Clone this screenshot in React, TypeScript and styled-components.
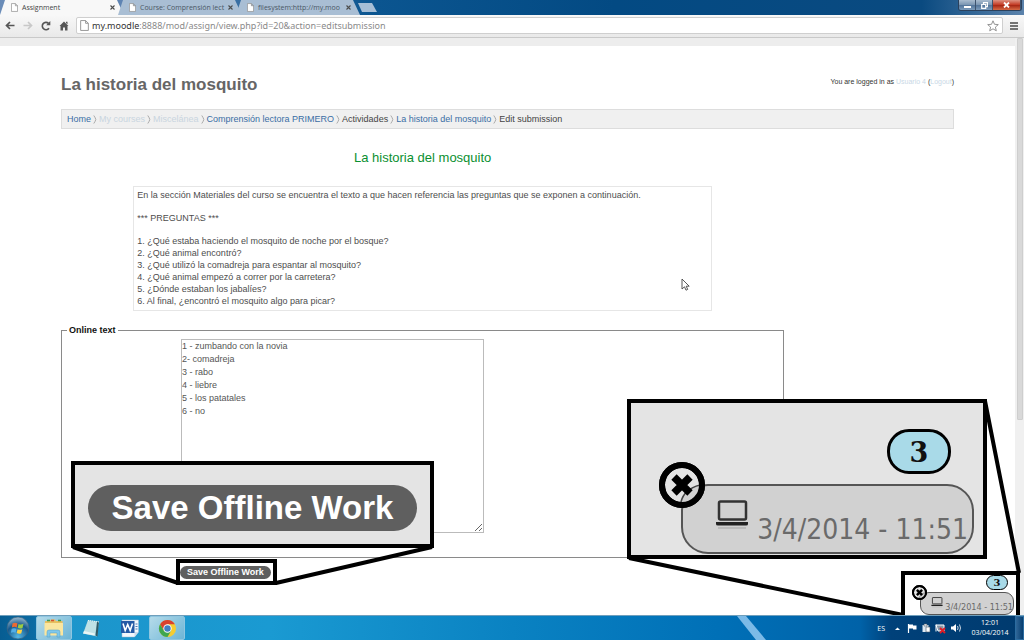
import React from "react";
import styled, { createGlobalStyle } from "styled-components";

const GlobalStyle = createGlobalStyle`
  * { box-sizing: border-box; }
  body { margin: 0; background: #fff; font-family: "Liberation Sans", Arial, sans-serif; }
  a { text-decoration: none; }
`;

const UI_FONT = `"Open Sans", "Noto Sans", sans-serif`;
const DATE_FONT = `"DejaVu Sans Condensed", "Noto Sans", sans-serif`;

const Screen = styled.div`
  position: relative;
  display: flex;
  flex-direction: column;
  min-height: 100vh;
  overflow: hidden;
`;

/* ---------- browser chrome ---------- */

const TabStrip = styled.div`
  display: flex;
  height: 15px;
  background: linear-gradient(90deg, #6a8cb8 0, #5f84b3 120px, #0b5590 375px, #034a83 60%, #0a4a80 90%, #5c83ac 100%);
  font-family: ${UI_FONT};
`;

const Tab = styled.div<{ $active?: boolean }>`
  display: flex;
  align-items: center;
  width: 124px;
  height: 15px;
  margin-right: -6px;
  padding: 0 9px 0 11px;
  background: ${(p) => (p.$active ? "#f8f8f8" : "#a9bed4")};
  color: ${(p) => (p.$active ? "#444" : "#4a5866")};
  clip-path: polygon(5px 0, 117px 0, 124px 100%, 0 100%);
  font-size: 7px;
  line-height: 14px;
`;

const TabTitle = styled.span`
  flex: 1;
  margin-left: 4px;
  white-space: nowrap;
`;

const TabClose = styled.button`
  display: flex;
  margin: 0;
  padding: 0;
  border: 0;
  background: none;
`;

const NewTab = styled.button`
  width: 19px;
  height: 9px;
  margin: 3px 0 0 4px;
  padding: 0;
  border: 0;
  background: #a6bed6;
  clip-path: polygon(0 0, 14px 0, 19px 100%, 4px 100%);
`;

const WindowButtons = styled.div`
  display: flex;
  height: 11px;
  margin-left: auto;
  margin-right: 2px;
  border: 1px solid #2b415c;
  border-top: 0;
  border-radius: 0 0 3px 3px;
  overflow: hidden;
`;

const WindowButton = styled.button<{ $close?: boolean }>`
  display: flex;
  align-items: center;
  justify-content: center;
  width: ${(p) => (p.$close ? 28 : 17)}px;
  padding: 0;
  border: 0;
  border-right: 1px solid #3d536e;
  background: ${(p) =>
    p.$close
      ? "linear-gradient(#dd9282, #c5402a 45%, #a92a17 55%, #d66a45)"
      : "linear-gradient(#a9bccf, #7d98b4 45%, #55779c 55%, #7b9bbb)"};
`;

const Toolbar = styled.div`
  display: flex;
  align-items: center;
  height: 23px;
  padding: 0 1px 1px;
  background: linear-gradient(#f8f8f8, #e9e9e9);
  border-bottom: 1px solid #c9c9c9;
`;

const ToolButton = styled.button`
  display: flex;
  justify-content: center;
  width: 18px;
  padding: 0;
  border: 0;
  background: none;
`;

const AddressBar = styled.div`
  display: flex;
  flex: 1;
  align-items: center;
  height: 17px;
  margin: 0 2px 0 3px;
  padding: 0 3px;
  border: 1px solid #cfcfcf;
  border-radius: 2px;
  background: #fff;
`;

const Address = styled.div`
  flex: 1;
  margin-left: 3px;
  color: #8a8a8a;
  font-family: "Noto Sans", sans-serif;
  font-size: 9px;
  line-height: 14px;
  b { color: #333; font-weight: 400; }
`;

/* ---------- page ---------- */

const Viewport = styled.div`
  display: flex;
  flex: 1;
`;

const Page = styled.main`
  flex: 1;
  padding: 0 61px 29px;
  border-top: 8px solid #ededed;
`;

const ScrollTrack = styled.div`
  width: 9px;
  padding: 0 1px 0 2px;
  background: #f0f0f0;
`;

const ScrollThumb = styled.div`
  height: 382px;
  border: 1px solid #cecece;
  border-radius: 1px;
  background: #d9d9d9;
`;

const PageHeader = styled.header`
  display: flex;
  justify-content: space-between;
  align-items: flex-start;
  padding-top: 29px;
`;

const SiteTitle = styled.h1`
  margin: 0;
  color: #666;
  font-size: 17px;
  line-height: 20px;
`;

const LoginInfo = styled.div`
  color: #333;
  font-size: 7px;
  line-height: 13px;
  a { color: #c9d8e6; }
`;

const Breadcrumb = styled.nav`
  display: flex;
  align-items: center;
  gap: 2px;
  height: 20px;
  margin-top: 14px;
  padding: 0 5px;
  border: 1px solid #ddd;
  background: #f0f0f0;
  color: #444;
  font-size: 9px;
  line-height: 12px;
  white-space: nowrap;
`;

const Crumb = styled.a<{ $faded?: boolean }>`
  color: ${(p) => (p.$faded ? "#c9d5df" : "#3a6ea5")};
`;

const Column = styled.div`
  width: 81%;
`;

const AssignmentTitle = styled.h2`
  margin: 20px 0 0;
  color: #0a9030;
  font-size: 13px;
  font-weight: 400;
  line-height: 18px;
  text-align: center;
`;

const Intro = styled.section`
  width: 80%;
  margin: 19px auto 0;
  padding: 2px 3px 3px;
  border: 1px solid #e6e6e6;
  color: #4d4d4d;
  font-size: 9px;
  line-height: 12px;
  p { margin: 0 0 11px; }
`;

const Questions = styled.ol`
  margin: 0;
  padding: 0;
  list-style: none;
`;

const TextFieldset = styled.fieldset`
  margin: 13px 0 0;
  padding: 3px 0 24px 119px;
  border: 1px solid #8a8a8a;
`;

const Legend = styled.legend`
  margin-left: -114px;
  padding: 0 2px;
  color: #111;
  font-size: 9px;
  font-weight: 700;
  line-height: 12px;
`;

const Answer = styled.textarea`
  display: block;
  width: 303px;
  height: 194px;
  padding: 0;
  border: 1px solid #bbb;
  background: #fff;
  color: #555;
  font-family: inherit;
  font-size: 9px;
  line-height: 13px;
  resize: both;
`;

const SaveButton = styled.button<{ $large?: boolean }>`
  display: block;
  padding: ${(p) => (p.$large ? "0 24px" : "0 7px")};
  border: 0;
  border-radius: 24px;
  background: #5f5f5f;
  color: #fff;
  font-family: inherit;
  font-size: ${(p) => (p.$large ? 33 : 9)}px;
  font-weight: 700;
  line-height: ${(p) => (p.$large ? 46 : 13)}px;
  white-space: nowrap;
`;

const FormActions = styled.div`
  display: flex;
  padding: 8px 0 0 119px;
`;

/* ---------- callouts drawn over the page ---------- */

const Connectors = styled.svg`
  position: absolute;
  top: 0;
  left: 0;
  pointer-events: none;
`;

const Callout = styled.div<{ $x: number; $y: number; $w: number; $h: number; $fill?: string }>`
  position: absolute;
  left: ${(p) => p.$x}px;
  top: ${(p) => p.$y}px;
  width: ${(p) => p.$w}px;
  height: ${(p) => p.$h}px;
  display: flex;
  align-items: center;
  justify-content: center;
  border: 4px solid #000;
  background: ${(p) => p.$fill ?? "transparent"};
`;

const ButtonZoom = styled(Callout)`
  align-items: flex-start;
  padding-top: 20px;
`;

const Status = styled.div<{ $large?: boolean }>`
  display: flex;
  flex-direction: column;
  align-items: flex-end;
  width: 100%;
  height: 100%;
  padding: ${(p) => (p.$large ? "26px 9px 0 20px" : "0 2px 0 0")};
`;

const Badge = styled.div<{ $large?: boolean }>`
  width: ${(p) => (p.$large ? 64 : 22)}px;
  height: ${(p) => (p.$large ? 45 : 15)}px;
  margin-right: ${(p) => (p.$large ? 23 : 6)}px;
  border: ${(p) => (p.$large ? "3px solid #000" : "1px solid #000")};
  border-radius: 22px;
  background: #a9dae8;
  color: #111;
  font-family: "DejaVu Serif", serif;
  font-size: ${(p) => (p.$large ? 27 : 10)}px;
  font-weight: 700;
  line-height: ${(p) => (p.$large ? 42 : 13)}px;
  text-align: center;
`;

const Pill = styled.div<{ $large?: boolean }>`
  position: relative;
  display: flex;
  align-items: flex-start;
  width: ${(p) => (p.$large ? 293 : 94)}px;
  height: ${(p) => (p.$large ? 70 : 23)}px;
  margin-top: ${(p) => (p.$large ? 10 : 2)}px;
  padding: ${(p) => (p.$large ? "14px 4px 0 32px" : "4px 0 0 10px")};
  border: ${(p) => (p.$large ? 2 : 1)}px solid #555;
  border-radius: ${(p) => (p.$large ? 27 : 9)}px;
  background: #d1d1d1;
`;

const PillTime = styled.time<{ $large?: boolean }>`
  margin-left: auto;
  padding-top: ${(p) => (p.$large ? 12 : 4)}px;
  color: #6a6a6a;
  font-family: ${DATE_FONT};
  font-size: ${(p) => (p.$large ? 28 : 9)}px;
  line-height: ${(p) => (p.$large ? 36 : 12)}px;
  white-space: nowrap;
`;

const Dismiss = styled.button<{ $large?: boolean }>`
  position: absolute;
  left: ${(p) => (p.$large ? -24 : -9)}px;
  top: ${(p) => (p.$large ? -24 : -8)}px;
  padding: 0;
  border: 0;
  background: none;
  svg { display: block; }
`;

/* ---------- taskbar ---------- */

const Taskbar = styled.footer`
  position: relative;
  display: flex;
  height: 25px;
  border-top: 1px solid #6f9fbc;
  background: linear-gradient(90deg, #075d92 0, #0b6ba3 34px, #1c95cb 60px, #1a9ad2 270px, #0a82c2 50%, #0070b7 70%, #0062a8 84%, #00417a 87%, #003a6e 100%);
  color: #fff;
  font-family: ${UI_FONT};
`;

const TaskButton = styled.button<{ $open?: boolean; $w: number }>`
  display: flex;
  align-items: center;
  justify-content: center;
  width: ${(p) => p.$w}px;
  padding: 0;
  border: ${(p) => (p.$open ? "1px solid #8fc6e0" : "0")};
  border-radius: 2px;
  background: ${(p) => (p.$open ? "linear-gradient(135deg, #b5dbea, #6db5d6)" : "none")};
`;

const Streak = styled.svg`
  position: absolute;
  left: 72%;
  top: 0;
`;

const Tray = styled.div`
  display: flex;
  align-items: center;
  gap: 4px;
  margin-left: auto;
  font-size: 7px;
`;

const Clock = styled.time`
  width: 42px;
  margin-left: 3px;
  line-height: 10px;
  text-align: center;
  white-space: nowrap;
`;

const ShowDesktop = styled.button`
  align-self: stretch;
  width: 9px;
  padding: 0;
  border: 1px solid #2b6ca0;
  background: linear-gradient(90deg, #2f6698, #073e70);
`;

/* ---------- icons ---------- */

const FileIcon = ({ h = 9 }: { h?: number }) => (
  <svg width={h - 2} height={h} viewBox="0 0 8 10">
    <path d="M.5.5h4.5l2.500 2.500v6.500h-7zM5 .5v2.500h2.500" fill="#fff" stroke="#8c8c8c" strokeWidth=".8" />
  </svg>
);

const CrossIcon = () => (
  <svg width="5" height="5" viewBox="0 0 5 5">
    <path d="M.5.5l4 4m0-4l-4 4" stroke="#4c4c4c" strokeWidth="1.100" />
  </svg>
);

const Chevron = () => (
  <svg width="4" height="9" viewBox="0 0 4 9">
    <path d="M.8.5Q2.500 3 2.800 4.500Q2.500 6 .8 8.500" fill="none" stroke="#aaa" />
  </svg>
);

const DismissIcon = ({ size }: { size: number }) => (
  <svg width={size} height={size} viewBox="0 0 46 46">
    <circle cx="23" cy="23" r="20" fill="#e4e4e4" stroke="#000" strokeWidth="6" />
    <path d="M22 42Q24 28 42 23A20 20 0 0 1 22 42" fill="#d1d1d1" />
    <path d="M22 40Q25 27 41 23" fill="none" stroke="#444" strokeWidth="1.500" />
    <circle cx="23" cy="23" r="20" fill="none" stroke="#000" strokeWidth="6" />
    <path d="M15 15l16 16M31 15L15 31" stroke="#000" strokeWidth="7.500" />
  </svg>
);

const LaptopIcon = ({ size }: { size: number }) => (
  <svg width={size} height={size} viewBox="0 0 34 34" fill="none">
    <rect x="4" y="1.500" width="27" height="18" rx="1.500" stroke="#333" strokeWidth="2.500" />
    <path d="M1 22h32v2q0 1.500-2 1.500H3q-2 0-2-1.500z" fill="#222" />
    <path d="M3 28h28" stroke="#aaa" strokeWidth="2" opacity=".6" />
  </svg>
);

const FlagsOrb = () => (
  <svg width="24" height="24" viewBox="0 0 24 24">
    <defs>
      <radialGradient id="orb" cx=".5" cy=".9" r=".9">
        <stop offset="0" stopColor="#55b8e5" />
        <stop offset=".6" stopColor="#17598e" />
        <stop offset="1" stopColor="#9fbdd0" />
      </radialGradient>
    </defs>
    <circle cx="12" cy="12" r="11" fill="url(#orb)" stroke="#39627f" strokeWidth=".7" />
    <path d="M6.500 7.500q2.500-1.500 5 0l-.8 4q-2.300-1.300-4.800 0z" fill="#ec6a32" />
    <path d="M12.500 8q2.500 1.200 5-.3l-1 4.300q-2.300 1.200-4.700-.2z" fill="#9bcc43" />
    <path d="M5.700 12.800q2.300-1.300 4.800 0l-.9 4q-2.300-1.300-4.700 0z" fill="#53aee6" />
    <path d="M11.600 13.200q2.300 1.200 4.700 0l-1 4q-2.200 1.200-4.600-.1z" fill="#fcd045" />
  </svg>
);

const FolderIcon = () => (
  <svg width="22" height="20" viewBox="0 0 22 20">
    <path d="M2 3h5l1-1.500h4L13 3h6.500v14H2z" fill="#e6bf60" />
    <path d="M4 2.500h3M15 2.500h3" stroke="#3b9c55" strokeWidth="1.500" />
    <path d="M8 2.500h3" stroke="#d4542e" strokeWidth="1.500" />
    <path d="M1.500 5h18.500v12.500H1.500z" fill="#fae6a0" />
    <path d="M4 19v-5q0-2 2-2h9q2 0 2 2v5h-3v-4H7v4z" fill="#80c7ea" stroke="#4c9cc5" strokeWidth=".5" />
  </svg>
);

const NotepadIcon = () => (
  <svg width="20" height="20" viewBox="0 0 20 20">
    <path d="M7 2l11 1.500-2 15L2 15.500z" fill="#9fd0da" />
    <path d="M7 3l9 1.500L14 16 3 14z" fill="#c0e2e6" />
    <path d="M3 13l11 2.500-.5 2L2 15.500z" fill="#e9f5f5" />
    <path d="M18 3.500l-1.500 15-2-1L16 4z" fill="#315a66" />
    <path d="M7 2.500l11 1.500" stroke="#f0f7f7" strokeDasharray="1 1" />
  </svg>
);

const WordIcon = () => (
  <svg width="18" height="19" viewBox="0 0 18 19">
    <path d="M1 1h16.500v12l-4 5H1z" fill="#f3f7fc" stroke="#9bb5d3" strokeWidth=".5" />
    <path d="M13.500 18v-5h4" fill="#cadbec" />
    <path d="M0 2h13.500v12H0z" fill="#2459a5" />
    <path d="M2 4.500l2.200 7L6.700 5.500l2.500 6 2.300-7" fill="none" stroke="#fff" strokeWidth="1.600" />
    <path d="M14.500 5h2M14.500 7.500h2M14.500 10h2" stroke="#2459a5" strokeWidth=".8" />
  </svg>
);

const ChromeIcon = () => (
  <svg width="19" height="19" viewBox="0 0 20 20">
    <circle cx="10" cy="10" r="9" fill="#f5cc31" />
    <path d="M2.200 5.500A9 9 0 0 1 17.800 5.500H10L6.100 12.200z" fill="#d9412f" />
    <path d="M2.200 5.500L6.100 12.300 13.800 12.300 10 19A9 9 0 0 1 2.200 5.500" fill="#3fa650" />
    <circle cx="10" cy="10" r="4.400" fill="#fff" />
    <circle cx="10" cy="10" r="3.400" fill="#427fc4" />
  </svg>
);

/* ---------- composition ---------- */

const StatusWidget = ({ large }: { large?: boolean }) => (
  <Status $large={large}>
    <Badge $large={large}>3</Badge>
    <Pill $large={large}>
      <Dismiss $large={large} aria-label="Discard">
        <DismissIcon size={large ? 46 : 15} />
      </Dismiss>
      <LaptopIcon size={large ? 34 : 12} />
      <PillTime $large={large}>3/4/2014 - 11:51</PillTime>
    </Pill>
  </Status>
);

const tabs = ["Assignment", "Course: Comprensión lect", "filesystem:http://my.moo"];

const crumbs = [
  { text: "Home", link: true },
  { text: "My courses", link: true, faded: true },
  { text: "Miscelánea", link: true, faded: true },
  { text: "Comprensión lectora PRIMERO", link: true },
  { text: "Actividades" },
  { text: "La historia del mosquito", link: true },
  { text: "Edit submission" },
];

const questions = [
  "1. ¿Qué estaba haciendo el mosquito de noche por el bosque?",
  "2. ¿Qué animal encontró?",
  "3. ¿Qué utilizó la comadreja para espantar al mosquito?",
  "4. ¿Qué animal empezó a correr por la carretera?",
  "5. ¿Dónde estaban los jabalíes?",
  "6. Al final, ¿encontró el mosquito algo para picar?",
];

const answers = "1 - zumbando con la novia\n2- comadreja\n3 - rabo\n4 - liebre\n5 - los patatales\n6 - no";

export default function App() {
  return (
    <Screen>
      <GlobalStyle />
      <TabStrip>
        {tabs.map((t, i) => (
          <Tab key={t} $active={i === 0}>
            <FileIcon />
            <TabTitle>{t}</TabTitle>
            <TabClose aria-label="Close tab"><CrossIcon /></TabClose>
          </Tab>
        ))}
        <NewTab aria-label="New tab" />
        <WindowButtons>
          <WindowButton aria-label="Minimize">
            <svg width="7" height="5"><path d="M0 3h7v2H0z" fill="#fff" /></svg>
          </WindowButton>
          <WindowButton aria-label="Restore">
            <svg width="7" height="7"><path d="M2.500 2V.7h4v4H5M.7 2.500h4v3.800h-4z" fill="none" stroke="#fff" strokeWidth="1.200" /></svg>
          </WindowButton>
          <WindowButton $close aria-label="Close">
            <svg width="7" height="6"><path d="M1 .5l5 5M6 .5l-5 5" stroke="#fff" strokeWidth="1.800" /></svg>
          </WindowButton>
        </WindowButtons>
      </TabStrip>

      <Toolbar>
        <ToolButton aria-label="Back">
          <svg width="10" height="9"><path d="M9.500 4.500H1.500M5 1L1.500 4.500 5 8" fill="none" stroke="#555" strokeWidth="1.700" /></svg>
        </ToolButton>
        <ToolButton aria-label="Forward">
          <svg width="10" height="9"><path d="M.5 4.500h8M5 1l3.500 3.500L5 8" fill="none" stroke="#c8c8c8" strokeWidth="1.700" /></svg>
        </ToolButton>
        <ToolButton aria-label="Reload">
          <svg width="10" height="10"><path d="M8 7.200A3.700 3.700 0 1 1 7.500 2.300" fill="none" stroke="#555" strokeWidth="1.600" /><path d="M9.300 0v4.200H5.200z" fill="#555" /></svg>
        </ToolButton>
        <ToolButton aria-label="Home">
          <svg width="10" height="10"><path d="M5 .5l4.500 4.500H8.500v4.500H6v-3H4v3H1.500V5H.5zM7 .8h1.500v2.500L7 2z" fill="#555" /></svg>
        </ToolButton>
        <AddressBar>
          <FileIcon h={11} />
          <Address><b>my.moodle</b>:8888/mod/assign/view.php?id=20&amp;action=editsubmission</Address>
          <svg width="12" height="12" viewBox="0 0 12 12"><path d="M6 .8l1.500 3.500 3.800.3-2.900 2.500.9 3.700L6 8.800l-3.300 2 .9-3.700L.7 4.600l3.800-.3z" fill="#fff" stroke="#888" strokeWidth=".9" /></svg>
        </AddressBar>
        <ToolButton aria-label="Menu">
          <svg width="8" height="8"><path d="M0 1h8M0 4h8M0 7h8" stroke="#4a4a4a" strokeWidth="1.700" /></svg>
        </ToolButton>
      </Toolbar>

      <Viewport>
        <Page>
          <PageHeader>
            <SiteTitle>La historia del mosquito</SiteTitle>
            <LoginInfo>
              You are logged in as <a href="#user">Usuario 4</a> (<a href="#logout">Logout</a>)
            </LoginInfo>
          </PageHeader>
          <Breadcrumb>
            {crumbs.map((c, i) => (
              <React.Fragment key={c.text}>
                {i > 0 && <Chevron />}
                {c.link ? <Crumb href="#page" $faded={c.faded}>{c.text}</Crumb> : <span>{c.text}</span>}
              </React.Fragment>
            ))}
          </Breadcrumb>
          <Column>
            <AssignmentTitle>La historia del mosquito</AssignmentTitle>
            <Intro>
              <p>En la sección Materiales del curso se encuentra el texto a que hacen referencia las preguntas que se exponen a continuación.</p>
              <p>*** PREGUNTAS ***</p>
              <Questions>
                {questions.map((q) => <li key={q}>{q}</li>)}
              </Questions>
            </Intro>
            <TextFieldset>
              <Legend>Online text</Legend>
              <Answer aria-label="Online text" defaultValue={answers} />
            </TextFieldset>
            <FormActions>
              <SaveButton>Save Offline Work</SaveButton>
            </FormActions>
          </Column>
        </Page>
        <ScrollTrack><ScrollThumb /></ScrollTrack>
      </Viewport>

      <Connectors width="1024" height="616" stroke="#000" strokeWidth="4" fill="none">
        <path d="M73 547L178 583M432 547L276 583M629 558L903 615M985 401L1019 573" />
      </Connectors>
      <ButtonZoom $x={71} $y={461} $w={363} $h={87} $fill="#e4e4e4">
        <SaveButton $large>Save Offline Work</SaveButton>
      </ButtonZoom>
      <Callout $x={176} $y={559} $w={101} $h={26} />
      <Callout $x={627} $y={399} $w={360} $h={160} $fill="#e4e4e4">
        <StatusWidget large />
      </Callout>
      <Callout $x={901} $y={571} $w={119} $h={48} $fill="#fff">
        <StatusWidget />
      </Callout>
      <Connectors width="1024" height="640" viewBox="0 0 1024 640">
        <path d="M682 279v10l2.500-2.200 1.500 3.400 1.700-.8-1.500-3.200h3z" fill="#fff" stroke="#444" strokeWidth=".9" />
      </Connectors>

      <Taskbar>
        <Streak width="40" height="24"><path d="M0 0h9l20 24H19z" fill="#90c8f0" opacity=".85" /></Streak>
        <TaskButton $w={36} aria-label="Start"><FlagsOrb /></TaskButton>
        <TaskButton $w={36} $open aria-label="Explorer"><FolderIcon /></TaskButton>
        <TaskButton $w={38} aria-label="Notepad"><NotepadIcon /></TaskButton>
        <TaskButton $w={39} aria-label="Word"><WordIcon /></TaskButton>
        <TaskButton $w={36} $open aria-label="Chrome"><ChromeIcon /></TaskButton>
        <Tray>
          <span>ES</span>
          <svg width="14" height="10"><path d="M6 7h5L8.500 4.500z" fill="#fff" /></svg>
          <svg width="10" height="10"><path d="M1.500 1v9" stroke="#fff" strokeWidth="1.200" /><path d="M2 1.500h4v1h3.500v4H6v-1H2z" fill="#fff" /></svg>
          <svg width="10" height="10"><path d="M1.500 2h6v7h-6z" fill="#dce8f2" /><path d="M3 1h3v2H3zM5 4h4v5H5z" fill="#fff" stroke="#456" strokeWidth=".6" /></svg>
          <svg width="12" height="11"><path d="M1 1.500v7M1 2h8v6H3z" fill="#8798a8" stroke="#fff" /><path d="M5 5l5 5M10 5l-5 5" stroke="#e01b24" strokeWidth="1.800" /></svg>
          <svg width="11" height="10"><path d="M0 3.500h2L5 1v8L2 6.500H0z" fill="#fff" /><path d="M6.500 3q1.200 2 0 4M8.500 1.500q2 3.500 0 7" fill="none" stroke="#fff" strokeWidth=".8" /></svg>
          <Clock>12:01<br />03/04/2014</Clock>
          <ShowDesktop aria-label="Show desktop" />
        </Tray>
      </Taskbar>
    </Screen>
  );
}
